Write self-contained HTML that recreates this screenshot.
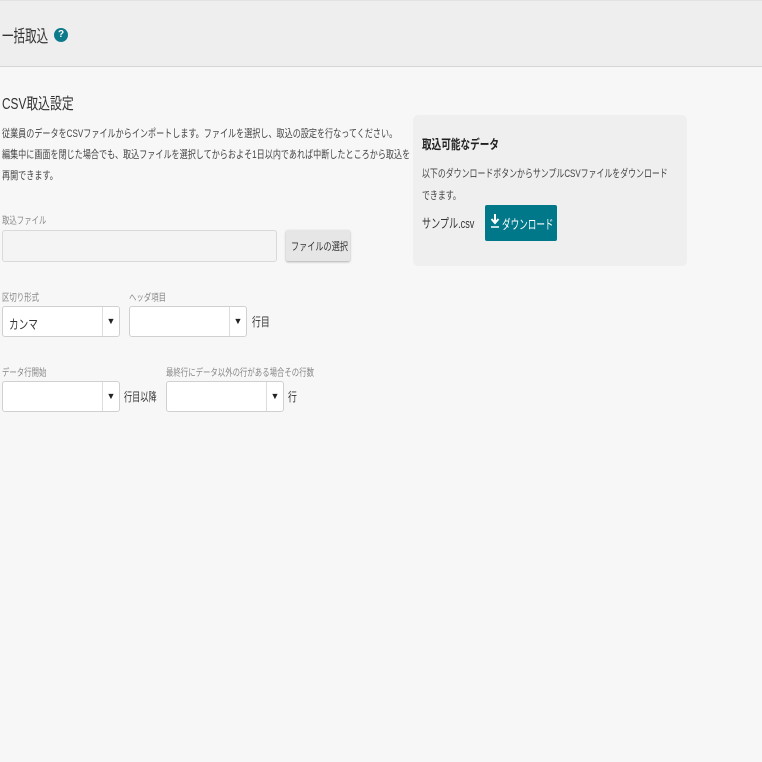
<!DOCTYPE html>
<html><head><meta charset="utf-8"><style>
*{margin:0;padding:0;box-sizing:border-box}
body{width:762px;height:762px;background:#f7f7f7;font-family:"Liberation Sans","Noto Sans CJK JP",sans-serif;color:#333;position:relative;overflow:hidden}
.a{position:absolute;white-space:nowrap}
.c{transform:scaleX(.74);transform-origin:left center}
.hd{position:absolute;left:0;top:0;width:762px;height:67px;background:#eeeeee;border-top:1px solid #e2e2e2;border-bottom:1px solid #d6d6d6}
.in{position:absolute;background:#f4f4f4;border:1px solid #d9d9d9;border-radius:3px}
.sel{position:absolute;background:#fff;border:1px solid #d0d0d0;border-radius:3px;height:31px}
.sel .ar{position:absolute;right:0;top:0;width:17px;height:100%;border-left:1px solid #ddd;font-size:9px;text-align:center;line-height:29px;color:#222}
.lb{font-size:10px;color:#888}
</style></head><body>
<div class="hd"></div>
<div class="a c" style="left:2px;top:22px;font-size:17px;color:#333;transform:scaleX(.68)">一括取込</div>
<div class="a" style="left:54px;top:28px;width:14px;height:14px;border-radius:50%;background:#0d7a8c;color:#fff;font-size:10px;font-weight:bold;text-align:center;line-height:14px">?</div>
<div class="a c" style="left:2px;top:90px;font-size:16px;color:#333">CSV取込設定</div>
<div class="a c" style="left:2px;top:124px;font-size:11px;line-height:21px;color:#444;transform:scaleX(.735)">従業員のデータをCSVファイルからインポートします。ファイルを選択し、取込の設定を行なってください。<br>編集中に画面を閉じた場合でも、取込ファイルを選択してからおよそ1日以内であれば中断したところから取込を<br>再開できます。</div>
<div class="a c lb" style="left:2px;top:212px">取込ファイル</div>
<div class="in" style="left:2px;top:230px;width:275px;height:32px"></div>
<div class="a" style="left:286px;top:230px;width:64px;height:31px;background:#e6e6e6;border-radius:2px;box-shadow:0 1px 2px rgba(0,0,0,.3)"></div>
<div class="a c" style="left:291px;top:238px;font-size:11px;color:#333">ファイルの選択</div>

<div class="a c lb" style="left:2px;top:289px">区切り形式</div>
<div class="a c lb" style="left:129px;top:289px">ヘッダ項目</div>
<div class="sel" style="left:2px;top:306px;width:118px"><span class="a c" style="left:6px;top:7px;font-size:13px;color:#333">カンマ</span><div class="ar">▼</div></div>
<div class="sel" style="left:129px;top:306px;width:118px"><div class="ar">▼</div></div>
<div class="a c" style="left:252px;top:313px;font-size:12px">行目</div>

<div class="a c lb" style="left:2px;top:364px">データ行開始</div>
<div class="a c lb" style="left:166px;top:364px">最終行にデータ以外の行がある場合その行数</div>
<div class="sel" style="left:2px;top:381px;width:118px"><div class="ar">▼</div></div>
<div class="a c" style="left:124px;top:388px;font-size:12px;transform:scaleX(.68)">行目以降</div>
<div class="sel" style="left:166px;top:381px;width:118px"><div class="ar">▼</div></div>
<div class="a c" style="left:288px;top:388px;font-size:12px">行</div>

<div class="a" style="left:413px;top:115px;width:274px;height:151px;background:#efefef;border-radius:5px"></div>
<div class="a c" style="left:422px;top:134px;font-size:13px;font-weight:bold;color:#222">取込可能なデータ</div>
<div class="a c" style="left:422px;top:163px;font-size:11px;line-height:22px;color:#444;transform:scaleX(.72)">以下のダウンロードボタンからサンプルCSVファイルをダウンロード<br>できます。</div>
<div class="a c" style="left:422px;top:213px;font-size:13px;color:#333;transform:scaleX(.7)">サンプル.csv</div>
<div class="a" style="left:485px;top:205px;width:72px;height:36px;background:#00788a;border-radius:2px"></div>
<svg class="a" style="left:490px;top:213px" width="10" height="16" viewBox="0 0 10 16"><path d="M5 1v8M1.5 6l3.5 4 3.5-4" stroke="#fff" stroke-width="2" fill="none"/><path d="M1 14h8" stroke="#fff" stroke-width="1.5"/></svg>
<div class="a c" style="left:502px;top:214px;font-size:13px;color:#fff;transform:scaleX(.66)">ダウンロード</div>
</body></html>
